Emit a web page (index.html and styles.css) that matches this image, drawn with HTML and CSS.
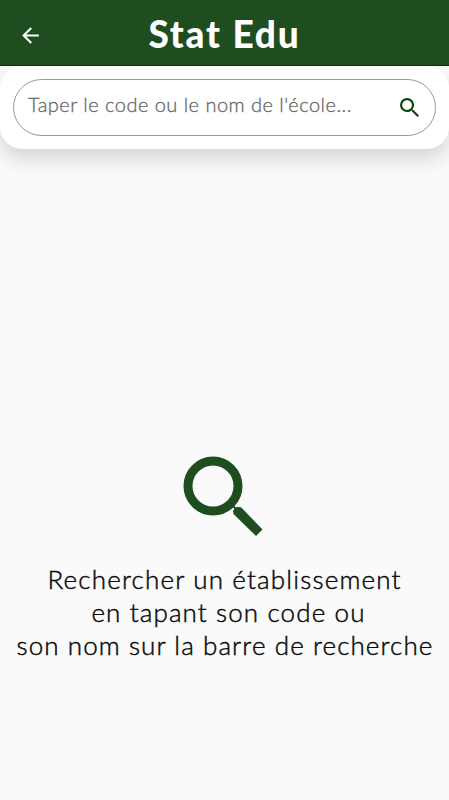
FILE: index.html
```html
<!DOCTYPE html>
<html lang="fr">
<head>
<meta charset="utf-8">
<title>Stat Edu</title>
<link rel="stylesheet" href="styles.css">
</head>
<body>
<header class="appbar">
  <svg class="back" viewBox="0 0 24 24"><path d="M20 11H7.83l5.59-5.59L12 4l-8 8 8 8 1.41-1.41L7.83 13H20z"/></svg>
  <h1 class="title">Stat Edu</h1>
</header>
<section class="panel">
  <div class="search">
    <span class="placeholder">Taper le code ou le nom de l'école...</span>
    <svg class="search-icon" viewBox="3 3 17.49 17.49"><path d="M15.5 14h-.79l-.28-.27A6.47 6.47 0 0 0 16 9.5 6.5 6.5 0 1 0 9.5 16c1.61 0 3.09-.59 4.23-1.57l.27.28v.79l5 4.99L20.49 19zm-6 0C7.01 14 5 11.99 5 9.5S7.01 5 9.5 5 14 7.01 14 9.5 11.99 14 9.5 14z"/></svg>
  </div>
</section>
<main class="empty">
  <svg class="big-icon" viewBox="0 0 80 80"><circle cx="30" cy="30" r="25"/><path d="M47 47L55 55"/><path class="handle" d="M50 54.5L53.5 51L58 51.2L79.5 73.5L73 80L50.5 58Z"/></svg>
  <p class="message">
    <span class="line line-a">Rechercher un établissement</span>
    <span class="line line-b">en tapant son code ou</span>
    <span class="line line-c">son nom sur la barre de recherche</span>
  </p>
</main>
</body>
</html>
```
FILE: styles.css
```css
* { box-sizing: border-box; }
body {
  margin: 0;
  height: 800px;
  overflow: hidden;
  background: #fafafa;
  font-family: Lato, "Liberation Sans", sans-serif;
}
.appbar {
  display: grid;
  grid-template-columns: 62px 1fr 62px;
  align-items: center;
  height: 66px;
  padding-top: 2px;
  background: #1e4d20;
  border-bottom: 1px solid #08330b;
}
.back { width: 25px; height: 25px; margin: 3px 0 0 18px; fill: #fff; }
.title {
  margin: 0;
  text-align: center;
  color: #fff;
  font-size: 37px;
  line-height: 44px;
  font-weight: 900;
  letter-spacing: 1.8px;
  white-space: nowrap;
}
.panel {
  height: 83px;
  padding: 13px 13px 14px;
  background: #fff;
  border-radius: 22px;
  box-shadow: 0 10px 20px rgba(0, 0, 0, .15);
}
.search {
  display: flex;
  align-items: center;
  justify-content: space-between;
  height: 57px;
  padding: 0 16px 0 14px;
  border: 1px solid #999;
  border-radius: 29px;
}
.placeholder {
  padding-bottom: 7px;
  color: #666;
  font-size: 20px;
  font-weight: 300;
  letter-spacing: .48px;
  -webkit-text-stroke: .3px #666;
  white-space: nowrap;
}
.search-icon { width: 19px; height: 19px; fill: #064a0b; }
.empty {
  display: flex;
  flex-direction: column;
  align-items: center;
  padding-top: 307px;
}
.big-icon { width: 80px; height: 80px; margin-right: 4px; }
.big-icon circle { fill: none; stroke: #1e4d20; stroke-width: 9; }
.big-icon path { stroke: #1e4d20; stroke-width: 2; }
.big-icon .handle { fill: #1e4d20; stroke: none; }
.message {
  margin: 27px 0 0;
  color: #080808;
  font-size: 26px;
  font-weight: 300;
  line-height: 33px;
  text-align: center;
  -webkit-text-stroke: .45px #080808;
}
.line { display: block; white-space: nowrap; }
.line-a { letter-spacing: 1.17px; }
.line-b { padding-left: 8px; letter-spacing: 1.12px; }
.line-c { padding-left: 1px; letter-spacing: 1.09px; }
```
